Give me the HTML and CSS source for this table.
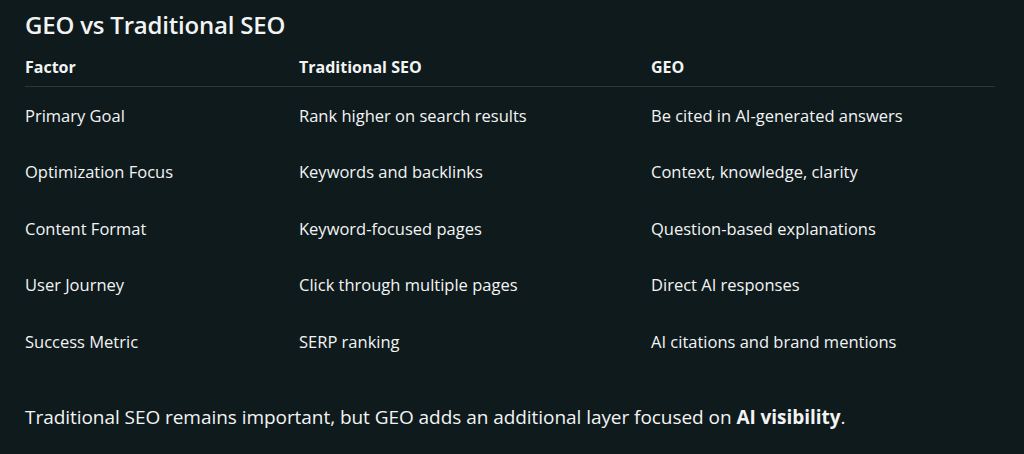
FILE: index.html
```html
<!DOCTYPE html>
<html>
<head>
<meta charset="utf-8">
<link rel="stylesheet" href="styles.css">
</head>
<body>
<main class="page">
  <h1 class="title">GEO vs Traditional SEO</h1>
  <table class="compare">
    <thead>
      <tr><th class="c1">Factor</th><th class="c2">Traditional SEO</th><th class="c3">GEO</th></tr>
    </thead>
    <tbody>
      <tr><td>Primary Goal</td><td>Rank higher on search results</td><td>Be cited in AI-generated answers</td></tr>
      <tr><td>Optimization Focus</td><td>Keywords and backlinks</td><td>Context, knowledge, clarity</td></tr>
      <tr><td>Content Format</td><td>Keyword-focused pages</td><td>Question-based explanations</td></tr>
      <tr><td>User Journey</td><td>Click through multiple pages</td><td>Direct AI responses</td></tr>
      <tr><td>Success Metric</td><td>SERP ranking</td><td>AI citations and brand mentions</td></tr>
    </tbody>
  </table>
  <p class="note">Traditional SEO remains important, but GEO adds an additional layer focused on <strong>AI visibility</strong>.</p>
</main>
</body>
</html>
```
FILE: styles.css
```css
html, body {
  margin: 0;
  padding: 0;
  background: #0f1a1c;
}
body {
  width: 1024px;
  height: 454px;
  overflow: hidden;
  color: #f2f4f4;
  font-family: "Open Sans", "Noto Sans", sans-serif;
}
.page {
  padding: 9px 29px 0 25px;
}
.title {
  margin: 0;
  font-size: 24px;
  font-weight: 600;
  line-height: 32px;
  letter-spacing: -0.2px;
}
.compare {
  width: 970px;
  border-collapse: collapse;
  margin-top: 7px;
  font-size: 16.5px;
}
.compare th {
  text-align: left;
  font-size: 16px;
  font-weight: 700;
  height: 38px;
  padding: 0;
  border-bottom: 1px solid #2a3638;
}
.c1 { width: 274px; }
.c2 { width: 352px; }
.compare td {
  padding: 0;
  height: 56.5px;
  font-weight: 400;
}
.note {
  margin: 34px 0 0;
  font-size: 19px;
  line-height: 26px;
  letter-spacing: -0.05px;
}
.note strong { font-weight: 700; }
```
